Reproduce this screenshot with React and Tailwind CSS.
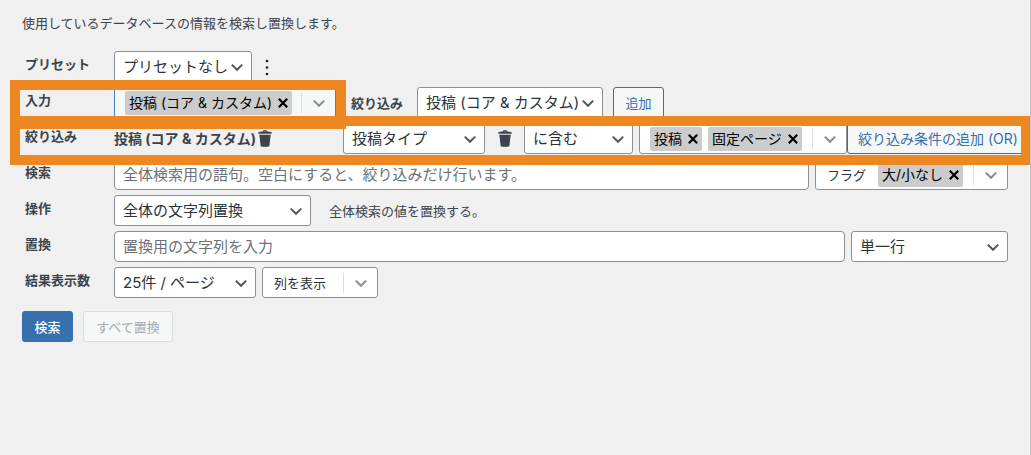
import { useState } from 'react';

const Chevron = ({ className = '' }) => (
    <svg
        viewBox="0 0 14 14"
        className={`w-3.5 h-3.5 fill-none stroke-2 ${className}`}
        aria-hidden="true"
    >
        <path d="M1.8 4.6 7 9.8l5.2-5.2" stroke="currentColor" />
    </svg>
);

const TrashIcon = () => (
    <svg viewBox="0 0 14 17" className="w-3.5 h-[17px]" fill="currentColor" aria-hidden="true">
        <path d="M4.6 1.6C4.8.7 5.4.3 7 .3s2.2.4 2.4 1.3l3.6.5c.5.1.7.4.7 1v.7H.3v-.7c0-.6.2-.9.7-1zM5.700 1.500h2.600C8.100 1 5.900 1 5.700 1.500z" fillRule="evenodd" />
        <path d="M1.300 4.800h11.400l-1.300 10.700c-.1.800-.6 1.200-1.300 1.200H3.900c-.7 0-1.200-.4-1.300-1.200z" />
    </svg>
);

const TrashButton = ({ label }) => (
    <button type="button" aria-label={label} className="shrink-0 text-[#3c434a]">
        <TrashIcon />
    </button>
);

function Select({ id, label, options, className = '' }) {
    return (
        <div className={`relative shrink-0 ${className}`}>
            <select
                id={id}
                aria-label={label}
                className="w-full h-[31px] appearance-none rounded-[3px] border border-[#8c8f94] bg-white pl-2 pr-5 text-[15px] text-[#2c3338]"
            >
                {options.map((option) => (
                    <option key={option}>{option}</option>
                ))}
            </select>
            <Chevron className="absolute right-2 top-[9px] pointer-events-none text-[#50575e]" />
        </div>
    );
}

function Chip({ children, onRemove }) {
    return (
        <span className="flex h-6 items-center gap-1.5 rounded-[2px] bg-[#cccccc] px-1 text-sm text-black whitespace-nowrap">
            {children}
            <button type="button" aria-label={`${children} を削除`} onClick={onRemove}>
                <svg viewBox="0 0 10 10" className="w-2.5 h-2.5" stroke="currentColor" strokeWidth="2.2" aria-hidden="true">
                    <path d="M.8.8l8.400 8.400M9.200.8L.8 9.200" />
                </svg>
            </button>
        </span>
    );
}

// Select-like box that holds removable chips
function MultiSelect({ label, text, initial = [], className = '' }) {
    const [items, setItems] = useState(initial);

    return (
        <div
            role="group"
            aria-label={label}
            className={`flex h-[31px] shrink-0 items-center rounded-[3px] border pl-2.5 text-[13px] ${className}`}
        >
            <div className="flex flex-1 items-center gap-1.5">
                {text && <span className="mr-1.5 pl-px text-[#2c3338]">{text}</span>}
                {items.map((item) => (
                    <Chip key={item} onRemove={() => setItems(items.filter((i) => i !== item))}>
                        {item}
                    </Chip>
                ))}
            </div>
            <span className="h-5 w-px bg-[#dcdcde]" />
            <button
                type="button"
                aria-label={`${label} を開く`}
                className="flex h-full w-[33px] items-center justify-center text-[#8c8c8c]"
            >
                <Chevron />
            </button>
        </div>
    );
}

function Row({ label, htmlFor, children }) {
    return (
        <div className="flex h-[31px] items-center">
            <div className="w-[92px] shrink-0 pl-[3px] pb-1.5 font-bold">
                {htmlFor ? <label htmlFor={htmlFor}>{label}</label> : label}
            </div>
            <div className="flex flex-1 min-w-0 items-center">{children}</div>
        </div>
    );
}

const inputClass =
    'h-[31px] min-w-0 flex-1 rounded-[4px] border border-[#8c8f94] bg-white px-2 text-[15px] text-[#2c3338] placeholder:text-[#6c7177]';

export default function App() {
    return (
        <main className="relative min-h-screen overflow-hidden border-r border-[#c3c4c7] bg-[#f0f0f1] pl-[22px] pr-[22px] pt-3.5 font-['Inter','Noto_Sans_CJK_JP',sans-serif] text-[13px] leading-[18px] text-[#3c434a]">
            <p>使用しているデータベースの情報を検索し置換します。</p>

            <form className="mt-[19px]" onSubmit={(e) => e.preventDefault()}>
                <div className="flex flex-col gap-[5px]">
                    <Row label="プリセット" htmlFor="preset">
                        <Select id="preset" options={['プリセットなし']} className="w-[138px]" />
                        <button type="button" aria-label="プリセットメニュー" className="ml-[13px] text-[#1d2327]">
                            <svg viewBox="0 0 4 18" className="w-1 h-[18px]" fill="currentColor" aria-hidden="true">
                                <circle cx="2" cy="3" r="1.3" />
                                <circle cx="2" cy="9.5" r="1.3" />
                                <circle cx="2" cy="16" r="1.3" />
                            </svg>
                        </button>
                    </Row>

                    <Row label="入力">
                        <MultiSelect
                            label="入力"
                            initial={['投稿 (コア & カスタム)']}
                            className="w-[222px] border-[#3f83c8] bg-[#f6f7f7]"
                        />
                        <label htmlFor="filter" className="ml-[15px] w-[66px] shrink-0 font-bold">
                            絞り込み
                        </label>
                        <Select id="filter" options={['投稿 (コア & カスタム)']} className="w-[186px]" />
                        <button
                            type="button"
                            className="ml-2.5 h-[31px] w-[51px] shrink-0 rounded-[3px] border border-[#3770ae] bg-[#f6f7f7] text-[#3770ae]"
                        >
                            追加
                        </button>
                    </Row>

                    <Row label="絞り込み">
                        <div className="flex w-[229px] shrink-0 items-center gap-0.5 text-sm font-bold whitespace-nowrap">
                            投稿 (コア & カスタム)
                            <TrashButton label="投稿の絞り込みを削除" />
                        </div>
                        <Select label="項目" options={['投稿タイプ']} className="mr-[13px] w-[142px]" />
                        <TrashButton label="条件を削除" />
                        <Select label="条件" options={['に含む']} className="ml-3 mr-1.5 w-[109px]" />
                        <MultiSelect
                            label="投稿タイプ"
                            initial={['投稿', '固定ページ']}
                            className="w-[208px] border-[#8c8f94] bg-white"
                        />
                        <button
                            type="button"
                            className="h-[31px] shrink-0 rounded-[3px] border border-[#3770ae] bg-[#f6f7f7] px-2.5 text-sm text-[#3770ae] whitespace-nowrap"
                        >
                            絞り込み条件の追加 (OR)
                        </button>
                    </Row>

                    <Row label="検索" htmlFor="search">
                        <input
                            id="search"
                            type="text"
                            placeholder="全体検索用の語句。空白にすると、絞り込みだけ行います。"
                            className={inputClass}
                        />
                        <MultiSelect
                            label="フラグ"
                            text="フラグ"
                            initial={['大/小なし']}
                            className="ml-1.5 w-[193px] border-[#8c8f94] bg-white"
                        />
                    </Row>

                    <Row label="操作" htmlFor="action">
                        <Select id="action" options={['全体の文字列置換']} className="w-[197px]" />
                        <span className="ml-[18px]">全体検索の値を置換する。</span>
                    </Row>

                    <Row label="置換" htmlFor="replace">
                        <input
                            id="replace"
                            type="text"
                            placeholder="置換用の文字列を入力"
                            className={inputClass}
                        />
                        <Select label="行の種類" options={['単一行']} className="ml-1.5 w-[157px]" />
                    </Row>

                    <Row label="結果表示数" htmlFor="perPage">
                        <Select id="perPage" options={['25件 / ページ']} className="w-[142px]" />
                        <MultiSelect
                            label="列を表示"
                            text="列を表示"
                            className="ml-1.5 w-[116px] border-[#8c8f94] bg-white"
                        />
                    </Row>
                </div>

                <div className="mt-[13px] flex gap-2.5">
                    <button
                        type="submit"
                        className="h-[31px] w-[51px] rounded-[3px] bg-[#3770ae] font-medium text-white"
                    >
                        検索
                    </button>
                    <button
                        type="button"
                        disabled
                        className="h-[31px] w-[90px] rounded-[3px] border border-[#dcdcde] bg-[#f6f7f7] text-[#a7aaad]"
                    >
                        すべて置換
                    </button>
                </div>
            </form>

            {/* highlight frames */}
            <div className="absolute left-2.5 top-20 h-[49px] w-[336px] border-10 border-[#ec8722] pointer-events-none" />
            <div className="absolute left-2.5 -right-px top-[116px] h-[49px] border-10 border-[#ec8722] pointer-events-none" />
        </main>
    );
}
